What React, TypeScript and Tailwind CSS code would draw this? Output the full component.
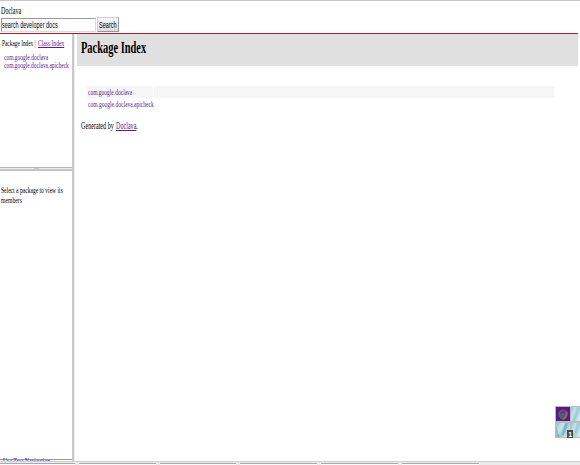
import { useLayoutEffect, useRef, useState } from "react";
import type { ReactNode } from "react";

// Text set on one line and condensed horizontally to a given width.
function Fit({ width, className = "", children }: { width: number; className?: string; children: ReactNode }) {
  const ref = useRef<HTMLSpanElement>(null);
  const [scale, setScale] = useState(0.62);
  useLayoutEffect(() => {
    if (ref.current) setScale(width / ref.current.offsetWidth);
  }, [width]);
  return (
    <span className="block shrink-0 whitespace-nowrap" style={{ width }}>
      <span ref={ref} className={`inline-block origin-left align-top ${className}`} style={{ transform: `scaleX(${scale})` }}>
        {children}
      </span>
    </span>
  );
}

const tabs = ["w-[77px]", "w-[76px]", "w-[77px]", "w-[77px]", "w-[77px]"];

function Header() {
  return (
    <header className="flex h-[34px] shrink-0 flex-col border-t border-t-[#c8c8c8] pl-px">
      <div className="h-[16px] pt-[4px] text-[10px] leading-[12px]">
        <Fit width={20}>Doclava</Fit>
      </div>
      <div className="flex h-[16px] gap-[1px] font-['Liberation_Sans',sans-serif] text-[9px] leading-[12px]">
        <div className="mt-px h-[14px] w-[95px] overflow-hidden border border-t-[#999] border-r-[#ddd] border-b-[#ddd] border-l-[#999]">
          <Fit width={56}>search developer docs</Fit>
        </div>
        <button className="flex h-[15px] w-[22px] items-center justify-center border border-[#d0d0d0] border-r-[#999] border-b-[#999] bg-linear-to-b from-[#f8f8f8] to-[#dcdcdc]">
          <Fit width={18}>Search</Fit>
        </button>
      </div>
      <div className="mr-[2px] -ml-px h-px bg-[#ac1a2d]" />
    </header>
  );
}

function Sidebar() {
  return (
    <aside className="flex w-[72px] shrink-0 flex-col">
      <div className="h-[133px] shrink-0 pt-[4px] text-[8.8px] leading-[11px]">
        <div className="flex gap-[2px] pl-[2px]">
          <Fit width={34}>Package Index |</Fit>
          <Fit width={26} className="text-[#5c1a8b] underline">Class Index</Fit>
        </div>
        <div className="pt-[4px] pl-[4px] text-[8.5px] leading-[8px] text-[#5c1a8b]">
          <Fit width={44}>com.google.doclava</Fit>
          <Fit width={65}>com.google.doclava.apicheck</Fit>
        </div>
      </div>
      <div className="flex h-[4px] shrink-0 justify-center border-t border-b-2 border-t-[#b8b8b8] border-b-[#c4c4c4] bg-[#eee]">
        <span className="h-px w-[5px] bg-[#ccc]" />
      </div>
      <div className="flex h-[288px] shrink-0 flex-col pt-[14px] pl-px text-[9px] leading-[10px]">
        <Fit width={62}>Select a package to view its</Fit>
        <Fit width={21}>members</Fit>
      </div>
      <div className="h-[3px] border-t border-[#999] pl-[3px] text-[8px] leading-[3px] text-[#0000ee]">
        <Fit width={47} className="underline">Use Tree Navigation</Fit>
      </div>
    </aside>
  );
}

function Divider() {
  return (
    <div className="flex w-[5px] shrink-0">
      <div className="h-full w-[2px] bg-[#c8c8c8]" />
      <div className="h-full w-px bg-[#eee]" />
    </div>
  );
}

function Content() {
  return (
    <main className="min-w-0 flex-1">
      <div className="mr-[2px] h-[32px] bg-[#e0e0e0] pt-[4px] pl-[4px] font-bold">
        <h1 className="text-[17px] leading-[20px]">
          <Fit width={65}>Package Index</Fit>
        </h1>
      </div>
      <div className="mt-[20px] mr-[26px] ml-[10px] text-[9px] leading-[12px] text-[#5c1a8b]">
        <div className="flex h-[12px] gap-px">
          <div className="w-[66px] bg-[#f6f6f6] pl-px">
            <Fit width={44}>com.google.doclava</Fit>
          </div>
          <div className="flex-1 bg-[#f6f6f6]" />
        </div>
        <div className="h-[12px] pl-px">
          <Fit width={66}>com.google.doclava.apicheck</Fit>
        </div>
      </div>
      <p className="flex gap-[2px] pt-[10px] pl-[4px] text-[10px] leading-[12px]">
        <Fit width={33}>Generated by</Fit>
        <Fit width={22}>
          <a className="text-[#5c1a8b] underline">Doclava</a>.
        </Fit>
      </p>
    </main>
  );
}

function Badge() {
  return (
    <svg className="absolute top-[406px] left-[555px]" width="25" height="33" viewBox="0 0 25 33">
      <defs>
        <linearGradient id="ice" x1="0" y1="0" x2="1" y2=".6">
          <stop offset="0" stopColor="#8cc6d2" />
          <stop offset=".4" stopColor="#c4e5ea" />
          <stop offset=".65" stopColor="#9acbd6" />
          <stop offset="1" stopColor="#cfeaee" />
        </linearGradient>
      </defs>
      <rect width="25" height="32" fill="#b9bdc0" />
      <rect x="1" y="1" width="14" height="14" fill="#54198a" />
      <rect x="16" y="1" width="9" height="14" fill="url(#ice)" />
      <rect x="1" y="17" width="14" height="14" fill="url(#ice)" />
      <rect x="16" y="17" width="9" height="14" fill="url(#ice)" />
      <path d="M1 20l4 11H1zM10 17l3 0-4 12-2 0z" fill="#467d8e" opacity=".35" />
      <g fill="none" strokeWidth="2.2" opacity=".85">
        <path d="M4.5 6Q8 3 11.5 6" stroke="#a63d55" />
        <path d="M4.5 6Q4 11 8 13" stroke="#477d59" />
        <path d="M11.5 6Q12 11 8 13" stroke="#a97644" />
      </g>
      <ellipse cx="8" cy="8.5" rx="1.8" ry="2.5" fill="#445f9b" />
      <rect x="12" y="24" width="6" height="8" fill="#484848" />
      <text x="13.2" y="30.5" fontSize="7" fontWeight="bold" fill="#fff" fontFamily="Liberation Sans, sans-serif">1</text>
    </svg>
  );
}

export default function App() {
  return (
    <div className="relative flex h-[465px] w-[580px] flex-col overflow-hidden bg-white font-['Liberation_Serif',serif] text-black">
      <Header />
      <div className="flex h-[427px] shrink-0">
        <Sidebar />
        <Divider />
        <Content />
      </div>
      <footer className="relative flex h-[4px] shrink-0 flex-col border-t border-[#d0d0d0] bg-[#ebebeb] pt-px">
        <div className="flex h-[2px] gap-[4px]">
          <div className="w-[75px] border-t border-[#aaa] bg-[#fafafa]" />
          {tabs.map((tab, i) => (
            <div key={i} className={`${tab} border-t border-[#aaa] bg-[#fafafa]`} />
          ))}
        </div>
      </footer>
      <Badge />
    </div>
  );
}
